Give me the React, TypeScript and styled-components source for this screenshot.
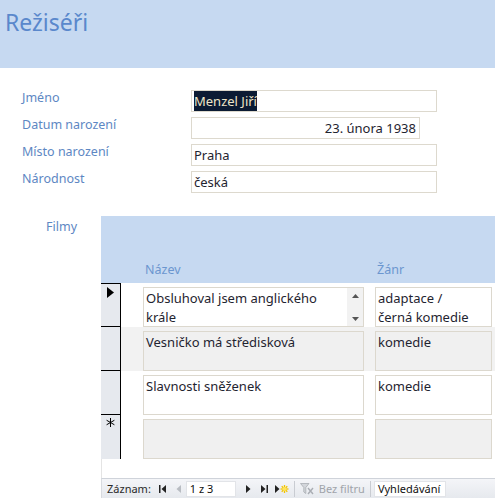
import React from "react";
import styled, { createGlobalStyle } from "styled-components";

const GlobalStyle = createGlobalStyle`
  html, body {
    margin: 0;
    padding: 0;
    background: #ffffff;
  }
  body {
    font-family: "Noto Sans", "Open Sans", sans-serif;
    font-size: 13px;
    color: #1f1f1f;
  }
`;

const Page = styled.div`
  width: 495px;
  height: 502px;
  overflow: hidden;
  background: #fff;
`;

const Header = styled.header`
  height: 68px;
  background: #c6d9f1;
  padding-left: 5px;
  box-sizing: border-box;
`;

const Title = styled.h1`
  margin: 0;
  padding-top: 7px;
  font-weight: 400;
  font-size: 23px;
  line-height: 30px;
  color: #5a88cc;
`;

const FieldList = styled.div`
  display: grid;
  grid-template-columns: 169px 1fr;
  row-gap: 5px;
  padding: 22px 0 0 22px;
`;

const Label = styled.label`
  color: #5d87c3;
  font-size: 12.5px;
  line-height: 18px;
  margin-top: -1px;
`;

const Field = styled.div<{ $width: number; $right?: boolean }>`
  width: ${(p) => p.$width}px;
  height: 22px;
  box-sizing: border-box;
  border: 1px solid #ddd9ce;
  background: #fff;
  padding: 0 3px 0 2px;
  line-height: 20px;
  font-size: 13px;
  color: #1f2430;
  text-align: ${(p) => (p.$right ? "right" : "left")};
  white-space: nowrap;
  overflow: hidden;
`;

const Selected = styled.span`
  background: #0c1b33;
  color: #efe6c8;
  padding: 1px 0;
`;

const FilmSection = styled.div`
  display: flex;
  margin-top: 23px;
`;

const FilmLabel = styled.div`
  flex: none;
  width: 101px;
  box-sizing: border-box;
  padding: 2px 0 0 46px;
  color: #5d87c3;
  font-size: 12.5px;
  line-height: 18px;
`;

const Subform = styled.div`
  flex: 1;
  min-width: 0;
  display: flex;
  flex-direction: column;
`;

const SubHeader = styled.div`
  height: 67px;
  background: #c6d9f1;
  display: flex;
  align-items: flex-end;
  padding-bottom: 5px;
  box-sizing: border-box;
`;

const ColTitle = styled.div<{ $width: number; $indent?: number }>`
  width: ${(p) => p.$width}px;
  padding-left: ${(p) => p.$indent ?? 0}px;
  box-sizing: border-box;
  color: #6b96cf;
  font-size: 12.5px;
  line-height: 16px;
`;

const Rows = styled.div`
  display: flex;
  flex-direction: column;
`;

const Row = styled.div<{ $alt?: boolean }>`
  display: flex;
  height: 44px;
  background: ${(p) => (p.$alt ? "#f2f2f2" : "#ffffff")};
`;

const Selector = styled.div<{ $first?: boolean; $last?: boolean }>`
  width: 20px;
  flex: none;
  box-sizing: border-box;
  background: #e6e9ee;
  border-right: 1px solid #000;
  border-top: ${(p) => (p.$first ? "1px solid #000" : "none")};
  border-bottom: ${(p) => (p.$last ? "none" : "1px solid #000")};
  display: flex;
  justify-content: center;
  padding-top: 3px;
`;

const Cells = styled.div`
  display: flex;
  gap: 11px;
  padding: 4px 0 0 22px;
  box-sizing: border-box;
`;

const Cell = styled.div<{ $width: number; $alt?: boolean }>`
  position: relative;
  width: ${(p) => p.$width}px;
  height: 40px;
  box-sizing: border-box;
  border: 1px solid #dcd8ce;
  background: ${(p) => (p.$alt ? "#f0f0f0" : "#ffffff")};
  padding: 1px 20px 0 2px;
  font-size: 13px;
  line-height: 19px;
  color: #1f2430;
`;

const GenreCell = styled(Cell)`
  padding-right: 12px;
`;

const ScrollBar = styled.div`
  position: absolute;
  top: 0;
  right: 0;
  bottom: 0;
  width: 16px;
  background: #f2f2f2;
  display: flex;
  flex-direction: column;
  justify-content: space-between;
  align-items: center;
  padding: 6px 0 5px;
  box-sizing: border-box;
`;

const Spacer = styled.div`
  height: 19px;
  border-left: 1px solid #e4e4e4;
`;

const NavBar = styled.div`
  height: 20px;
  box-sizing: border-box;
  border-top: 1px solid #cfd3da;
  border-left: 1px solid #d8dbe0;
  background: linear-gradient(#f4f5f8, #e6e9ee);
  display: flex;
  align-items: center;
  padding-left: 5px;
  font-size: 11px;
  color: #2a2a2a;
`;

const NavText = styled.span<{ $muted?: boolean; $gap?: number }>`
  color: ${(p) => (p.$muted ? "#a0a4aa" : "#2a2a2a")};
  margin-left: ${(p) => p.$gap ?? 0}px;
  white-space: nowrap;
`;

const NavButton = styled.span<{ $gap: number }>`
  display: inline-flex;
  margin-left: ${(p) => p.$gap}px;
`;

const NavInput = styled.div<{ $width: number; $gap: number }>`
  width: ${(p) => p.$width}px;
  height: 16px;
  margin-left: ${(p) => p.$gap}px;
  box-sizing: border-box;
  background: #fff;
  border: 1px solid #e2e4e8;
  padding-left: 3px;
  line-height: 14px;
  color: #111;
  white-space: nowrap;
  overflow: hidden;
`;

const Divider = styled.span<{ $gap: number }>`
  width: 1px;
  height: 16px;
  background: #c9ccd2;
  margin-left: ${(p) => p.$gap}px;
`;

const FirstIcon = () => (
  <svg width="7" height="8" viewBox="0 0 7 8">
    <rect x="0" y="0" width="1.5" height="8" fill="#222" />
    <path d="M7 0 L2.5 4 L7 8 Z" fill="#222" />
  </svg>
);

const PrevIcon = () => (
  <svg width="5" height="8" viewBox="0 0 5 8">
    <path d="M5 0 L0.5 4 L5 8 Z" fill="#b8bcc2" />
  </svg>
);

const NextIcon = () => (
  <svg width="5" height="8" viewBox="0 0 5 8">
    <path d="M0 0 L4.5 4 L0 8 Z" fill="#222" />
  </svg>
);

const LastIcon = () => (
  <svg width="7" height="8" viewBox="0 0 7 8">
    <path d="M0 0 L4.5 4 L0 8 Z" fill="#222" />
    <rect x="5.5" y="0" width="1.5" height="8" fill="#222" />
  </svg>
);

const NewIcon = () => (
  <svg width="14" height="10" viewBox="0 0 14 10">
    <path d="M0 1 L4.5 5 L0 9 Z" fill="#222" />
    <g stroke="#f2c300" strokeWidth="1.3">
      <line x1="9.5" y1="1" x2="9.5" y2="9" />
      <line x1="5.5" y1="5" x2="13.5" y2="5" />
      <line x1="6.7" y1="2.2" x2="12.3" y2="7.8" />
      <line x1="12.3" y1="2.2" x2="6.7" y2="7.8" />
    </g>
    <circle cx="9.5" cy="5" r="2" fill="#ffe35a" />
  </svg>
);

const FilterIcon = () => (
  <svg width="14" height="12" viewBox="0 0 14 12">
    <path d="M0.5 0.5 H9 L5.8 4.5 V10.5 L3.8 9 V4.5 Z" fill="#d3d6db" stroke="#a9adb3" strokeWidth="0.8" />
    <path d="M8 5 L13 11 M13 5 L8 11" stroke="#a9adb3" strokeWidth="1.4" />
  </svg>
);

const CurrentArrow = () => (
  <svg width="7" height="11" viewBox="0 0 7 11">
    <path d="M0 0 L7 5.5 L0 11 Z" fill="#000" />
  </svg>
);

const NewRowMark = () => (
  <svg width="9" height="9" viewBox="0 0 9 9">
    <g stroke="#000" strokeWidth="1">
      <line x1="4.5" y1="0" x2="4.5" y2="9" />
      <line x1="0.6" y1="2.25" x2="8.4" y2="6.75" />
      <line x1="0.6" y1="6.75" x2="8.4" y2="2.25" />
    </g>
  </svg>
);

const UpArrow = () => (
  <svg width="7" height="4" viewBox="0 0 7 4">
    <path d="M0 4 L3.5 0 L7 4 Z" fill="#555" />
  </svg>
);

const DownArrow = () => (
  <svg width="7" height="4" viewBox="0 0 7 4">
    <path d="M0 0 L3.5 4 L7 0 Z" fill="#555" />
  </svg>
);

const films = [
  { title: "Obsluhoval jsem anglického krále", genre: "adaptace / černá komedie" },
  { title: "Vesničko má středisková", genre: "komedie" },
  { title: "Slavnosti sněženek", genre: "komedie" },
];

export default function App() {
  return (
    <Page>
      <GlobalStyle />
      <Header>
        <Title>Režiséři</Title>
      </Header>

      <FieldList>
        <Label>Jméno</Label>
        <Field $width={246}>
          <Selected>Menzel Jiří</Selected>
        </Field>
        <Label>Datum narození</Label>
        <Field $width={229} $right>
          23. února 1938
        </Field>
        <Label>Místo narození</Label>
        <Field $width={246}>Praha</Field>
        <Label>Národnost</Label>
        <Field $width={246}>česká</Field>
      </FieldList>

      <FilmSection>
        <FilmLabel>Filmy</FilmLabel>
        <Subform>
          <SubHeader>
            <ColTitle $width={276} $indent={44}>
              Název
            </ColTitle>
            <ColTitle $width={100}>Žánr</ColTitle>
          </SubHeader>

          <Rows>
            {films.map((f, i) => {
              const alt = i % 2 === 1;
              return (
                <Row key={f.title} $alt={alt}>
                  <Selector $first={i === 0}>{i === 0 && <CurrentArrow />}</Selector>
                  <Cells>
                    <Cell $width={221} $alt={alt}>
                      {f.title}
                      {i === 0 && (
                        <ScrollBar>
                          <UpArrow />
                          <DownArrow />
                        </ScrollBar>
                      )}
                    </Cell>
                    <GenreCell $width={117} $alt={alt}>
                      {f.genre}
                    </GenreCell>
                  </Cells>
                </Row>
              );
            })}
            <Row>
              <Selector $last>
                <NewRowMark />
              </Selector>
              <Cells>
                <Cell $width={221} $alt />
                <GenreCell $width={117} $alt />
              </Cells>
            </Row>
          </Rows>

          <Spacer />

          <NavBar>
            <NavText>Záznam:</NavText>
            <NavButton $gap={8}>
              <FirstIcon />
            </NavButton>
            <NavButton $gap={10}>
              <PrevIcon />
            </NavButton>
            <NavInput $width={50} $gap={5}>
              1 z 3
            </NavInput>
            <NavButton $gap={10}>
              <NextIcon />
            </NavButton>
            <NavButton $gap={10}>
              <LastIcon />
            </NavButton>
            <NavButton $gap={7}>
              <NewIcon />
            </NavButton>
            <Divider $gap={5} />
            <NavButton $gap={5}>
              <FilterIcon />
            </NavButton>
            <NavText $muted $gap={5}>
              Bez filtru
            </NavText>
            <Divider $gap={5} />
            <NavInput $width={72} $gap={3}>
              Vyhledávání
            </NavInput>
          </NavBar>
        </Subform>
      </FilmSection>
    </Page>
  );
}
